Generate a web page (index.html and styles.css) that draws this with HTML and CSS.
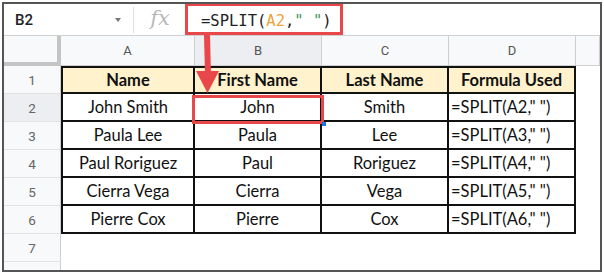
FILE: index.html
```html
<!DOCTYPE html>
<html lang="en">
  <head>
    <meta charset="UTF-8" />
    <title>SPLIT example</title>
    <link rel="stylesheet" href="styles.css">
  </head>
  <body>
    <div class="sheet">
      <div class="formula-bar">
        <div class="name-box">
          <span class="cell-ref">B2</span>
          <span class="caret"></span>
        </div>
        <div class="divider"></div>
        <div class="fx">fx</div>
        <div class="formula">=SPLIT(<span class="ref">A2</span>,<span class="str">" "</span>)</div>
      </div>

      <div class="grid">
        <div class="corner"></div>
        <div class="col-head">A</div>
        <div class="col-head selected">B</div>
        <div class="col-head">C</div>
        <div class="col-head">D</div>
        <div class="col-head"></div>

        <div class="row-head">1</div>
        <div class="cell head first-col">Name</div>
        <div class="cell head">First Name</div>
        <div class="cell head">Last Name</div>
        <div class="cell head">Formula Used</div>
        <div class="blank"></div>

        <div class="row-head selected">2</div>
        <div class="cell first-col">John Smith</div>
        <div class="cell">John</div>
        <div class="cell">Smith</div>
        <div class="cell formula-cell">=SPLIT(A2," ")</div>
        <div class="blank"></div>

        <div class="row-head">3</div>
        <div class="cell first-col">Paula Lee</div>
        <div class="cell">Paula</div>
        <div class="cell">Lee</div>
        <div class="cell formula-cell">=SPLIT(A3," ")</div>
        <div class="blank"></div>

        <div class="row-head">4</div>
        <div class="cell first-col">Paul Roriguez</div>
        <div class="cell">Paul</div>
        <div class="cell">Roriguez</div>
        <div class="cell formula-cell">=SPLIT(A4," ")</div>
        <div class="blank"></div>

        <div class="row-head">5</div>
        <div class="cell first-col">Cierra Vega</div>
        <div class="cell">Cierra</div>
        <div class="cell">Vega</div>
        <div class="cell formula-cell">=SPLIT(A5," ")</div>
        <div class="blank"></div>

        <div class="row-head">6</div>
        <div class="cell first-col">Pierre Cox</div>
        <div class="cell">Pierre</div>
        <div class="cell">Cox</div>
        <div class="cell formula-cell">=SPLIT(A6," ")</div>
        <div class="blank"></div>

        <div class="row-head">7</div>
        <div class="empty-row"></div>

        <div class="row-head">8</div>
        <div class="empty-row"></div>
      </div>

      <!-- annotations drawn over the sheet -->
      <div class="mark mark-formula"></div>
      <svg class="arrow" width="26" height="62" viewBox="0 0 26 62">
        <path d="M8 0 L14 0 L15 40 L9 40 Z" fill="#e8484a" />
        <path d="M0 36 L23 36 L11.5 58 Z" fill="#e8484a" />
      </svg>
      <div class="mark mark-cell"><span class="handle"></span></div>
    </div>
  </body>
</html>
```

FILE: styles.css
```css
body {
  margin: 0;
  background: #fff;
  font-family: Lato, "Open Sans", sans-serif;
}

.sheet {
  position: relative;
  margin: 2px 0 0 2px;
  width: 596px;
  height: 266px;
  border: 2px solid #555;
  overflow: hidden;
  background: #fff;
}

/* formula bar */
.formula-bar {
  display: flex;
  align-items: center;
  height: 32px;
  border-bottom: 1px solid #d0d0d0;
  box-sizing: border-box;
}

.name-box {
  width: 129px;
  display: flex;
  align-items: center;
  justify-content: space-between;
  padding: 0 12px 0 11px;
  box-sizing: border-box;
}

.cell-ref {
  font-family: Roboto, sans-serif;
  font-size: 15px;
  font-weight: 500;
  color: #202124;
}

.caret {
  width: 0;
  height: 0;
  border-left: 3px solid transparent;
  border-right: 3px solid transparent;
  border-top: 4px solid #777;
}

.divider {
  width: 1px;
  height: 26px;
  background: #e0e0e0;
}

.fx {
  width: 52px;
  text-align: center;
  font-family: "DejaVu Serif", serif;
  font-style: italic;
  font-size: 21px;
  color: #b8b8b8;
  margin-top: -3px;
}

.formula {
  padding-left: 15px;
  font-family: "DejaVu Sans Mono", monospace;
  font-size: 15.5px;
  color: #202124;
  margin-top: 2px;
}

.formula .ref {
  color: #f0a33a;
}

.formula .str {
  color: #3a9a5b;
}

/* grid */
.grid {
  display: grid;
  grid-template-columns: 57px 134px 127px 127px 127px 24px;
  grid-template-rows: 30px repeat(8, 28px);
}

.corner {
  background: #f8f9fa;
  border-right: 4px solid #c4c4c4;
  border-bottom: 4px solid #c4c4c4;
  box-sizing: border-box;
}

.col-head {
  display: flex;
  align-items: center;
  justify-content: center;
  background: #f8f9fa;
  border-right: 1px solid #cfcfcf;
  border-bottom: 1px solid #cfcfcf;
  box-sizing: border-box;
  font-family: Roboto, sans-serif;
  font-size: 13px;
  color: #555;
}

.col-head.selected,
.row-head.selected {
  background: #eceef1;
}

.row-head {
  display: flex;
  align-items: center;
  justify-content: center;
  background: #f8f9fa;
  border-right: 1px solid #cfcfcf;
  border-bottom: 1px solid #e2e2e2;
  box-sizing: border-box;
  font-family: Roboto, sans-serif;
  font-size: 13.5px;
  color: #666;
}

.cell {
  display: flex;
  align-items: center;
  justify-content: center;
  border-right: 2px solid #111;
  border-bottom: 2px solid #111;
  box-sizing: border-box;
  font-size: 16.5px;
  color: #111;
  white-space: nowrap;
}

.cell.first-col {
  border-left: 2px solid #111;
}

.cell.head {
  background: #fff2cc;
  font-weight: bold;
  border-top: 2px solid #111;
}

.formula-cell {
  justify-content: flex-start;
  padding-left: 2px;
}

.empty-row {
  grid-column: 2 / 7;
}

/* annotations */
.mark {
  position: absolute;
  border: 3px solid #e8484a;
  box-sizing: border-box;
}

.mark-formula {
  left: 181px;
  top: -1px;
  width: 158px;
  height: 32px;
}

.mark-cell {
  left: 188px;
  top: 91px;
  width: 132px;
  height: 29px;
}

.handle {
  position: absolute;
  right: -5px;
  bottom: -5px;
  width: 4px;
  height: 4px;
  background: #1a73e8;
}

.arrow {
  position: absolute;
  left: 192px;
  top: 31px;
}
```
